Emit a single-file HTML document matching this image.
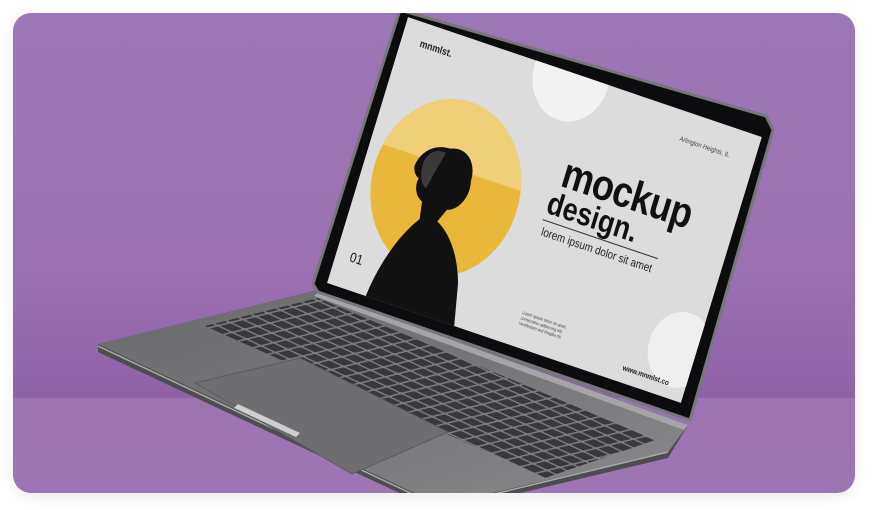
<!DOCTYPE html>
<html><head><meta charset="utf-8"><style>
html,body{margin:0;padding:0;background:#fff;width:872px;height:510px;overflow:hidden}
.card{position:absolute;left:13px;top:13px;width:842px;height:480px;border-radius:18px;overflow:hidden;
background:linear-gradient(#9c77b5 0px,#9a72b2 250px,#8f62a8 385px,#9c74b2 385px,#9c75b3 480px);box-shadow:0 4px 14px rgba(0,0,0,.08)}
svg{position:absolute;left:0;top:0}
</style></head><body>
<div class="card"></div>
<svg width="872" height="510" viewBox="0 0 872 510">
<defs>
<clipPath id="cc"><rect x="13" y="13" width="842" height="480" rx="18"/></clipPath>
<linearGradient id="base" x1="0" y1="0" x2="1" y2="1">
<stop offset="0" stop-color="#6c6c6e"/><stop offset="0.5" stop-color="#767678"/><stop offset="1" stop-color="#8a8a8c"/></linearGradient>
<pattern id="keys" width="16" height="14" patternUnits="userSpaceOnUse" patternTransform="matrix(0.9,0.42,-0.9,0.22,0,0)">
<rect width="16" height="14" fill="#7c7c80"/><rect x="1.2" y="1.2" width="13.6" height="11.6" rx="1.5" fill="#38383c"/></pattern>
<clipPath id="scr"><rect x="0" y="0" width="640" height="400"/></clipPath>
<clipPath id="circ"><circle cx="147" cy="215" r="128"/></clipPath>
</defs>
<g clip-path="url(#cc)">
<!-- base -->
<polygon points="98,344 318,290 688,425 668,458 440,512 98,352" fill="#4d4d50"/>
<polygon points="98,344 318,290 688,425 668,452 440,505" fill="url(#base)"/>
<polyline points="98,346 440,507 668,452" fill="none" stroke="#a9a9ab" stroke-width="1.5"/>
<polygon points="205,326 318,298 655,440 545,478" fill="url(#keys)"/>
<polygon points="195,383 300,358 448,432 352,474" fill="#6e6e70" stroke="#5a5a5c" stroke-width="1"/>
<polygon points="238,404 300,433 296,437 234,408" fill="#cfcfd2"/>
<polygon points="318,292 688,425 684,430 314,296" fill="#a5a5a8"/>
<!-- lid -->
<polygon points="400,10 766,116 773,130 690,420 318,292 313,284" fill="#0c0c0e" stroke="#77777a" stroke-width="3" stroke-linejoin="round"/>
<g transform="matrix(0.553,0.1875,-0.2025,0.665,408,17)">
<g clip-path="url(#scr)">
<rect width="640" height="400" fill="#dcdcdc"/>
<circle cx="297" cy="5" r="66" fill="#f2f2f2"/>
<circle cx="612" cy="328" r="55" fill="#efefef"/>
<circle cx="147" cy="215" r="128" fill="#e9b83a"/>
<rect x="0" y="60" width="300" height="125" fill="#efcf78" clip-path="url(#circ)"/>
<!-- person -->
<path d="M85,200 C88,175 110,160 135,160 C160,150 185,165 185,195 C192,215 180,240 160,245 L150,265 C175,275 200,300 215,340 L230,400 L70,400 C75,350 95,300 120,270 L115,245 C100,240 95,225 98,215 C90,212 86,206 85,200Z" fill="#111"/>
<path d="M98,190 C100,175 115,165 130,168 C125,185 120,205 115,225 C105,222 97,210 98,190Z" fill="#3a3a3a"/>
<text x="33" y="35" font-family="Liberation Sans,sans-serif" font-weight="bold" font-size="15" fill="#222">mnmlst.</text>
<text x="506" y="43" font-family="Liberation Sans,sans-serif" font-size="10" fill="#444">Arlington Heights, IL</text>
<text x="332" y="160" font-family="Liberation Sans,sans-serif" font-weight="bold" font-size="62" fill="#111" letter-spacing="-1">mockup</text>
<text x="322" y="203" font-family="Liberation Sans,sans-serif" font-weight="bold" font-size="46" fill="#111">design.</text>
<line x1="322" y1="214" x2="530" y2="214" stroke="#333" stroke-width="1.5"/>
<text x="326" y="236" font-family="Liberation Sans,sans-serif" font-size="17" fill="#222">lorem ipsum dolor sit amet</text>
<text x="25" y="360" font-family="Liberation Sans,sans-serif" font-size="20" fill="#111">01</text>
<text font-family="Liberation Sans,sans-serif" font-size="6.5" fill="#444"><tspan x="335" y="352">Lorem ipsum dolor sit amet,</tspan><tspan x="335" y="360">consectetur adipiscing elit.</tspan><tspan x="335" y="368">Vestibulum sed fringilla mi.</tspan></text>
<text x="527" y="382" font-family="Liberation Sans,sans-serif" font-weight="bold" font-size="11" fill="#222">www.mnmlst.co</text>
</g></g>
</g>
</svg>
</body></html>
